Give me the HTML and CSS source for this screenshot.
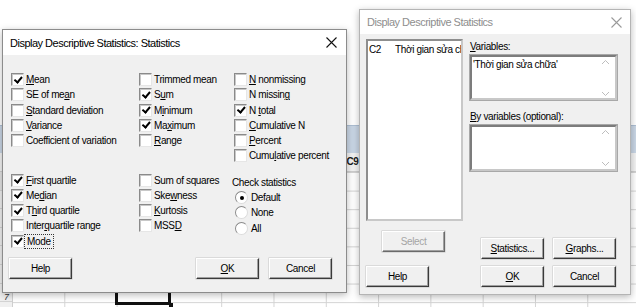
FILE: index.html
```html
<!DOCTYPE html>
<html lang="en">
<head>
    <meta charset="UTF-8">
    <title>Display Descriptive Statistics</title>
    <link rel="stylesheet" href="styles.css">
</head>
<body>
    <div class="sheet">
        <div class="sheet-top"></div>
        <div class="sheet-band"></div>
        <div class="sheet-cols">
            <span></span><span></span><span></span><span></span><span></span><span></span>
            <span>C9</span><span></span><span></span><span></span><span></span><span></span>
        </div>
        <div class="sheet-rows">
            <div class="row-heads">
                <span></span><span></span><span></span><span></span><span></span><span></span><span>7</span>
            </div>
            <div class="cell-cursor"></div>
        </div>
    </div>

    <!-- statistics sub dialog -->
    <div class="dlg dlg-stats">
        <div class="dlg-title">
            <span>Display Descriptive Statistics: Statistics</span>
            <svg class="close" width="11" height="11" viewBox="0 0 11 11"><path d="M0.5 0.5 L10.5 10.5 M10.5 0.5 L0.5 10.5"/></svg>
        </div>
        <div class="dlg-body">
            <div class="opts">
                <div class="opt-col c1">
                    <label class="chk"><span class="box on"></span><span><u>M</u>ean</span></label>
                    <label class="chk"><span class="box"></span><span>SE of me<u>a</u>n</span></label>
                    <label class="chk"><span class="box"></span><span><u>S</u>tandard deviation</span></label>
                    <label class="chk"><span class="box"></span><span><u>V</u>ariance</span></label>
                    <label class="chk"><span class="box"></span><span>Coefficient of variation</span></label>
                </div>
                <div class="opt-col c2">
                    <label class="chk"><span class="box"></span><span>Trimmed mean</span></label>
                    <label class="chk"><span class="box on"></span><span>S<u>u</u>m</span></label>
                    <label class="chk"><span class="box on"></span><span>M<u>i</u>nimum</span></label>
                    <label class="chk"><span class="box on"></span><span>Ma<u>x</u>imum</span></label>
                    <label class="chk"><span class="box"></span><span><u>R</u>ange</span></label>
                </div>
                <div class="opt-col c3">
                    <label class="chk"><span class="box"></span><span><u>N</u> nonmissing</span></label>
                    <label class="chk"><span class="box"></span><span>N missin<u>g</u></span></label>
                    <label class="chk"><span class="box on"></span><span>N <u>t</u>otal</span></label>
                    <label class="chk"><span class="box"></span><span><u>C</u>umulative N</span></label>
                    <label class="chk"><span class="box"></span><span><u>P</u>ercent</span></label>
                    <label class="chk"><span class="box"></span><span>Cumu<u>l</u>ative percent</span></label>
                </div>
            </div>
            <div class="opts opts-lower">
                <div class="opt-col c1">
                    <label class="chk"><span class="box on"></span><span><u>F</u>irst quartile</span></label>
                    <label class="chk"><span class="box on"></span><span>Me<u>d</u>ian</span></label>
                    <label class="chk"><span class="box on"></span><span>T<u>h</u>ird quartile</span></label>
                    <label class="chk"><span class="box"></span><span>Inter<u>q</u>uartile range</span></label>
                    <label class="chk"><span class="box on"></span><span class="focus">Mode</span></label>
                </div>
                <div class="opt-col c2">
                    <label class="chk"><span class="box"></span><span>Sum of squares</span></label>
                    <label class="chk"><span class="box"></span><span>Ske<u>w</u>ness</span></label>
                    <label class="chk"><span class="box"></span><span><u>K</u>urtosis</span></label>
                    <label class="chk"><span class="box"></span><span>MSS<u>D</u></span></label>
                </div>
                <div class="opt-col c3 check-stats">
                    <div class="group-label">Check statistics</div>
                    <label class="rad"><span class="dot on"></span><span>Default</span></label>
                    <label class="rad"><span class="dot"></span><span>None</span></label>
                    <label class="rad"><span class="dot"></span><span>All</span></label>
                </div>
            </div>
            <div class="btn-row">
                <button class="btn">Help</button>
                <span class="spacer"></span>
                <button class="btn"><u>O</u>K</button>
                <button class="btn">Cancel</button>
            </div>
        </div>
    </div>

    <!-- main dialog, inactive -->
    <div class="dlg dlg-main inactive">
        <div class="dlg-title">
            <span>Display Descriptive Statistics</span>
            <svg class="close" width="11" height="11" viewBox="0 0 11 11"><path d="M0.5 0.5 L10.5 10.5 M10.5 0.5 L0.5 10.5"/></svg>
        </div>
        <div class="dlg-body">
            <div class="sel-row">
                <div class="listbox">
                    <div class="list-item"><span class="col-id">C2</span><span class="col-name">Thời gian sửa chữa</span></div>
                </div>
                <div class="fields">
                    <div class="field-label"><u>V</u>ariables:</div>
                    <div class="textbox">
                        <span>'Thời gian sửa chữa'</span>
                        <svg class="arrows" width="9" height="38" viewBox="0 0 9 38"><path d="M1 5 L4.5 1.5 L8 5 M1 33 L4.5 36.5 L8 33"/></svg>
                    </div>
                    <div class="field-label by"><u>B</u>y variables (optional):</div>
                    <div class="textbox tall">
                        <span></span>
                        <svg class="arrows" width="9" height="38" viewBox="0 0 9 38"><path d="M1 5 L4.5 1.5 L8 5 M1 33 L4.5 36.5 L8 33"/></svg>
                    </div>
                </div>
            </div>
            <div class="mid-row">
                <button class="btn select" disabled>Select</button>
                <div class="right-btns">
                    <button class="btn"><u>S</u>tatistics...</button>
                    <button class="btn"><u>G</u>raphs...</button>
                </div>
            </div>
            <div class="btn-row main-btns">
                <button class="btn">Help</button>
                <span class="spacer"></span>
                <button class="btn"><u>O</u>K</button>
                <button class="btn">Cancel</button>
            </div>
        </div>
    </div>
</body>
</html>
```

FILE: styles.css
```css
body {
    margin: 0;
    width: 636px;
    height: 307px;
    overflow: hidden;
    position: relative;
    background: #fff;
    font-family: "Liberation Sans", Arial, sans-serif;
    font-size: 10px;
    letter-spacing: -0.35px;
    color: #000;
}

/* worksheet behind the dialogs */
.sheet {
    position: absolute;
    inset: 0;
    display: grid;
    grid-template-rows: 125px 28px 19px 1fr;
}

.sheet-top {
    background: #fff;
}

.sheet-band {
    background: #c9d6e5;
    border-top: 1px solid #aebfd3;
}

.sheet-cols {
    display: flex;
    padding-left: 12px;
    background: #f3f3f3;
    border-bottom: 1px solid #cfcfcf;
}

.sheet-cols span {
    flex: 0 0 52.3px;
    box-sizing: border-box;
    border-left: 1px solid #d6d6d6;
    text-align: center;
    line-height: 18px;
    font-weight: bold;
    color: #1a1a1a;
}

.sheet-rows {
    position: relative;
    background-color: #fff;
    background-image:
        linear-gradient(#d4d4d4 1px, transparent 1px),
        linear-gradient(90deg, #d4d4d4 1px, transparent 1px);
    background-size: 100% 18.6px, 52.3px 100%;
    background-position: 0 0, 12px 0;
}

.row-heads {
    width: 12px;
    height: 100%;
    background: #f0f0f0;
    border-right: 1px solid #cfcfcf;
    display: flex;
    flex-direction: column;
}

.row-heads span {
    height: 18.6px;
    line-height: 26px;
    padding-left: 4px;
    font-size: 9px;
    font-style: italic;
    color: #333;
    border-bottom: 1px solid #d4d4d4;
    box-sizing: border-box;
}

.row-heads span:first-child {
    background: #e4e4e4;
}

.cell-cursor {
    position: absolute;
    left: 115px;
    top: 112px;
    width: 50px;
    height: 15px;
    border: 3px solid #111;
}

.cell-cursor::after {
    content: "";
    position: absolute;
    right: -5px;
    bottom: -6px;
    width: 4px;
    height: 5px;
    background: #111;
}

/* dialog windows */
.dlg {
    position: absolute;
    background: #f0f0f0;
    border: 1px solid #8c8c8c;
    box-shadow: 0 2px 7px rgba(0, 0, 0, 0.28);
    display: flex;
    flex-direction: column;
}

.dlg-stats {
    left: 2px;
    top: 29px;
    width: 343px;
    height: 262px;
}

.dlg-main {
    left: 359px;
    top: 9px;
    width: 270px;
    height: 284px;
    border-color: #b4b4b4;
}

.dlg-title {
    height: 25px;
    flex: none;
    background: #fff;
    display: flex;
    align-items: center;
    justify-content: space-between;
    padding: 0 9px 0 7px;
    font-size: 11px;
    letter-spacing: -0.5px;
}

.dlg-main .dlg-title {
    height: 24px;
    color: #8e8e8e;
    padding-right: 8px;
}

.close path {
    stroke: #111;
    stroke-width: 1.1;
    fill: none;
}

.inactive .close path {
    stroke: #9a9a9a;
}

.dlg-body {
    flex: 1;
    display: flex;
    flex-direction: column;
}

/* check boxes and radios */
.opts {
    display: flex;
    padding: 17px 0 0 8px;
}

.opts-lower {
    padding-top: 9px;
}

.opt-col {
    display: flex;
    flex-direction: column;
}

.opt-col.c1 {
    width: 128px;
}

.opt-col.c2 {
    width: 95px;
}

.chk,
.rad {
    display: flex;
    align-items: center;
    gap: 2px;
    height: 15.25px;
}

.box {
    width: 11px;
    height: 11px;
    flex: none;
    background: #fff;
    border: 1px solid;
    border-color: #8a8a8a #e6e6e6 #e6e6e6 #8a8a8a;
    box-shadow: inset 1px 1px 0 #c8c8c8;
    position: relative;
}

.box.on::after {
    content: "";
    position: absolute;
    left: 3.5px;
    top: 0.5px;
    width: 2.5px;
    height: 5.5px;
    border: solid #000;
    border-width: 0 2px 2px 0;
    transform: rotate(40deg);
}

.focus {
    outline: 1px dotted #333;
    outline-offset: 1px;
    padding: 0 1px;
}

.check-stats {
    padding-top: 3px;
}

.group-label {
    height: 14px;
    line-height: 14px;
    margin-left: -2px;
    margin-bottom: 0.5px;
}

.rad {
    gap: 3px;
    padding-left: 1px;
}

.dot {
    width: 11px;
    height: 11px;
    flex: none;
    border-radius: 50%;
    background: #fff;
    border: 1px solid;
    border-color: #8a8a8a #dcdcdc #dcdcdc #8a8a8a;
    position: relative;
}

.dot.on::after {
    content: "";
    position: absolute;
    left: 3.5px;
    top: 3.5px;
    width: 4px;
    height: 4px;
    border-radius: 50%;
    background: #000;
}

/* buttons */
.btn {
    width: 63px;
    height: 21px;
    padding: 0;
    font-family: inherit;
    font-size: 10px;
    letter-spacing: -0.35px;
    color: #000;
    background: #f0f0f0;
    border: 1px solid;
    border-color: #fff #3a3a3a #3a3a3a #fff;
    box-shadow: inset -1px -1px 0 #a0a0a0, 0 0 0 0.5px #c4c4c4;
}

.btn:disabled {
    color: #a5a5a5;
    border-color: #fff #6a6a6a #6a6a6a #fff;
}

.btn-row {
    display: flex;
    gap: 10px;
    margin-top: auto;
    padding: 0 14px 13px 6px;
}

.spacer {
    flex: 1;
}

/* main dialog */
.sel-row {
    display: flex;
    padding: 5px 0 0 6px;
}

.listbox {
    width: 93px;
    height: 178px;
    background: #fff;
    border: 2px solid;
    border-color: #8e8e8e #c8c8c8 #c8c8c8 #8e8e8e;
    overflow: hidden;
}

.list-item {
    display: flex;
    white-space: nowrap;
    padding: 3px 0 0 1px;
    overflow: hidden;
}

.col-id {
    width: 26px;
    flex: none;
}

.col-name {
    overflow: hidden;
    min-width: 0;
}

.fields {
    margin-left: 7px;
    display: flex;
    flex-direction: column;
}

.field-label {
    height: 14px;
    line-height: 14px;
    margin-top: 1px;
}

.field-label.by {
    margin-top: 10px;
}

.textbox {
    width: 142px;
    height: 41px;
    margin-top: 1px;
    background: #fff;
    border: 2px solid;
    border-color: #7c7c7c #c8c8c8 #c8c8c8 #7c7c7c;
    box-shadow: 0 0 0 1px #a8a8a8;
    display: flex;
    justify-content: space-between;
    padding-left: 1px;
}

.textbox.tall {
    height: 42px;
}

.textbox span {
    padding-top: 2px;
}

.arrows {
    margin: 2px 5px 0 0;
}

.arrows path {
    stroke: #bdbdbd;
    stroke-width: 1;
    fill: none;
}

.mid-row {
    display: flex;
    justify-content: space-between;
    padding: 0 14px 0 22px;
}

.select {
    margin-top: 10px;
}

.right-btns {
    display: flex;
    gap: 9px;
    margin-top: 17px;
}

.main-btns {
    gap: 9px;
    padding: 0 14px 7px 6px;
}
```
